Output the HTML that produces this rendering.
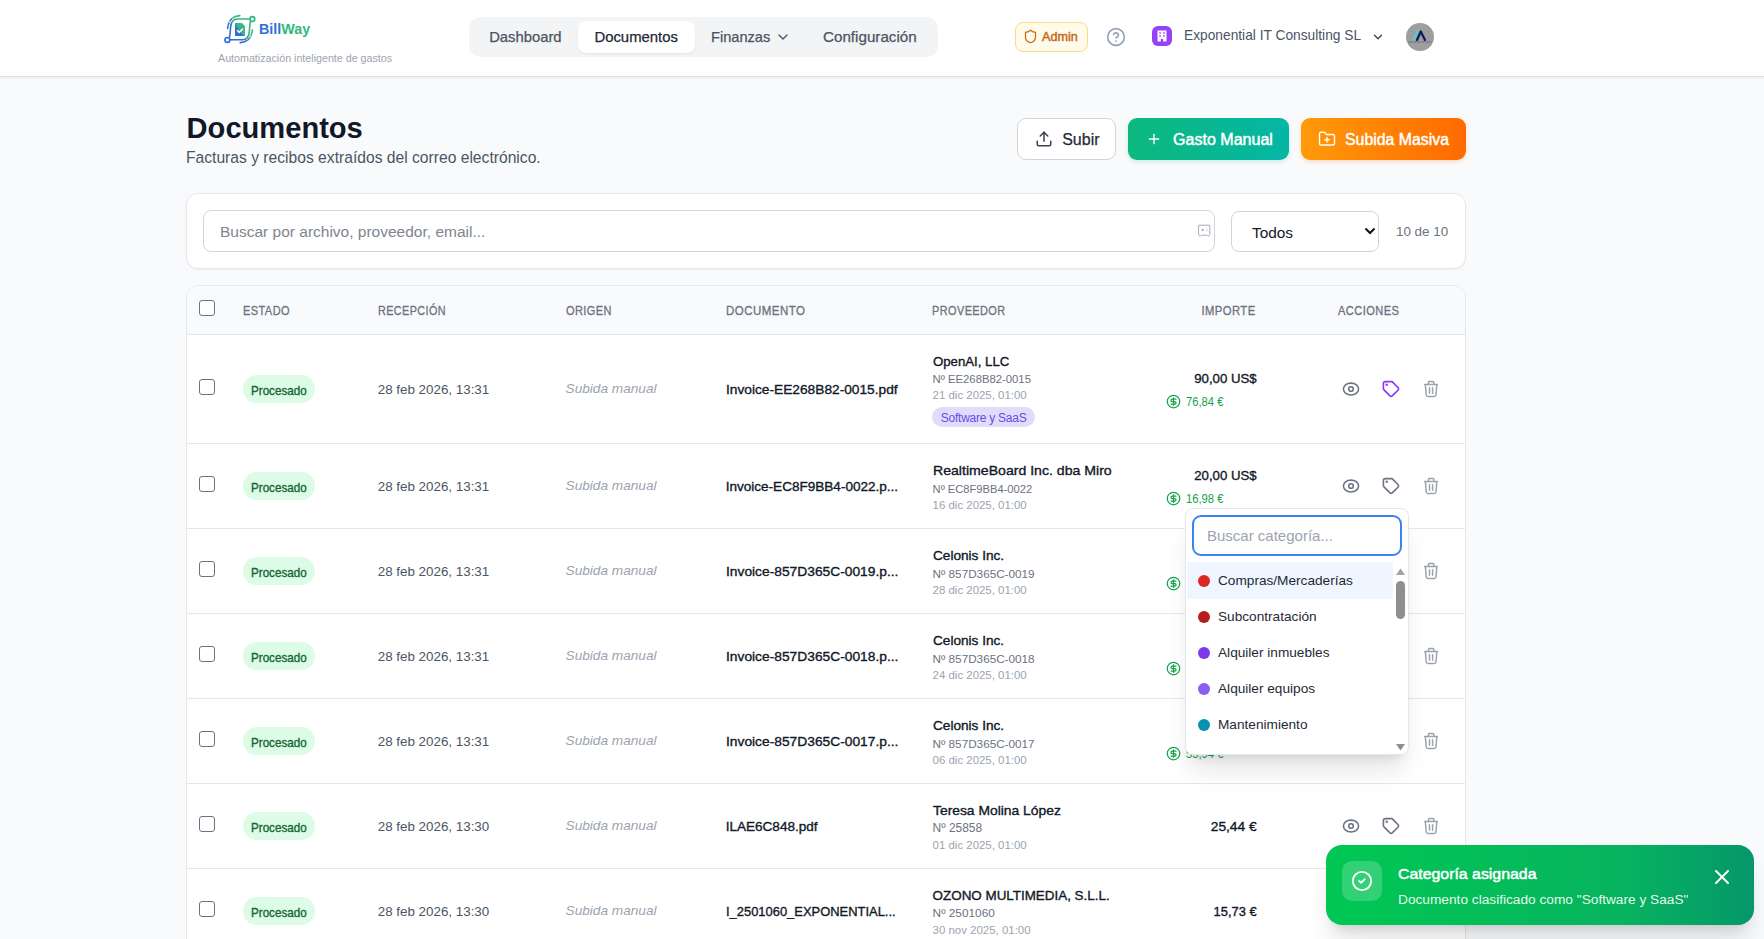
<!DOCTYPE html>
<html lang="es"><head><meta charset="utf-8"><title>Documentos - BillWay</title>
<style>
html,body{margin:0;padding:0;}
body{width:1764px;height:939px;overflow:hidden;position:relative;background:#f9fafb;font-family:"Liberation Sans",sans-serif;}
.a{position:absolute;}
.t{position:absolute;line-height:1;white-space:nowrap;}
svg.a{overflow:visible;}
</style></head><body>

<div class="a" style="left:0px;top:0px;width:1764px;height:76px;background:#fff;"></div>
<div class="a" style="left:0px;top:76px;width:1764px;height:1px;background:#dfe1e6;"></div>
<div class="a" style="left:0px;top:77px;width:1764px;height:3px;background:linear-gradient(#eceef1,#f9fafb);"></div>
<svg class="a" style="left:220px;top:12px" width="40" height="34" viewBox="0 0 40 34">
<defs><linearGradient id="lg" x1="0" y1="1" x2="1" y2="0"><stop offset="0.3" stop-color="#2f6fd8"/><stop offset="0.7" stop-color="#34b77a"/></linearGradient>
<linearGradient id="dg" x1="0" y1="1" x2="1" y2="0"><stop offset="0.38" stop-color="#2f6fd8"/><stop offset="0.5" stop-color="#3bb58a"/></linearGradient></defs>
<g fill="none" stroke="url(#lg)" stroke-width="1.6" stroke-linecap="round">
<path d="M29.9 7 L17.5 7 C12.8 7 10.8 10.5 10.5 16 C10.3 21 9.9 24 9.3 25.8"/>
<path d="M9.9 27.8 L22.5 27.8 C27.2 27.8 29.2 24.5 29.5 18 C29.7 13 30.1 10.5 30.6 9.2"/>
<path d="M19.8 3.6 C12.5 4 8.5 8.5 7.6 16.5" stroke-dasharray="7 1.6 3 2"/>
<path d="M20.2 30.6 C27.5 30.2 31.5 26 32.4 18" stroke-dasharray="7 1.6 3 2"/>
</g>
<circle cx="32.4" cy="7.1" r="2.4" fill="none" stroke="#34b77a" stroke-width="1.7"/>
<circle cx="7.4" cy="27.9" r="2.4" fill="none" stroke="#2f6fd8" stroke-width="1.7"/>
<path d="M15 11 L22 11 L25 14.2 L25 23.4 Q25 24 24.4 24 L15.6 24 Q15 24 15 23.4 Z" fill="url(#dg)"/>
<path d="M17.6 18.6 L19.4 20.3 L22.6 17" fill="none" stroke="#fff" stroke-width="1.6" stroke-linecap="round" stroke-linejoin="round"/>
</svg>
<div class="t" style="top:21.90px;font-size:14.3px;color:#2f6fd8;left:259.00px;font-weight:700;"><span style="color:#2f6fd8">Bill</span><span style="color:#32b97a">Way</span></div>
<div class="t" style="top:52.94px;font-size:10.7px;color:#9ca3af;left:218.00px;">Automatización inteligente de gastos</div>
<div class="a" style="left:469px;top:17px;width:469px;height:40px;background:#f3f4f6;border-radius:12px;"></div>
<div class="a" style="left:578px;top:21px;width:117px;height:32px;background:#fff;border-radius:8px;box-shadow:0 1px 2px rgba(0,0,0,0.08);"></div>
<div class="t" style="top:29.97px;font-size:14.8px;color:#4b5563;left:489.20px;-webkit-text-stroke:0.25px currentColor;">Dashboard</div>
<div class="t" style="top:29.89px;font-size:14.9px;color:#1f2937;left:594.40px;-webkit-text-stroke:0.25px currentColor;">Documentos</div>
<div class="t" style="top:30.14px;font-size:14.6px;color:#4b5563;left:711.00px;-webkit-text-stroke:0.25px currentColor;">Finanzas</div>
<svg class="a" style="left:775.00px;top:29.00px;" width="16" height="16" viewBox="0 0 24 24" fill="none" stroke="#4b5563" stroke-width="2" stroke-linecap="round" stroke-linejoin="round"><path d="m6 9 6 6 6-6"/></svg>
<div class="t" style="top:28.53px;font-size:15.2px;color:#4b5563;left:823.00px;-webkit-text-stroke:0.25px currentColor;">Configuración</div>
<div class="a" style="left:1015px;top:22px;width:73px;height:30px;box-sizing:border-box;background:#fffbeb;border:1px solid #fcd98a;border-radius:8px;"></div>
<svg class="a" style="left:1023.30px;top:29.20px;" width="15" height="15" viewBox="0 0 24 24" fill="none" stroke="#c4681a" stroke-width="2" stroke-linecap="round" stroke-linejoin="round"><path d="M20 13c0 5-3.5 7.5-7.66 8.95a1 1 0 0 1-.67-.01C7.5 20.5 4 18 4 13V6a1 1 0 0 1 1-1c2 0 4.5-1.2 6.24-2.72a1.17 1.17 0 0 1 1.52 0C14.51 3.81 17 5 19 5a1 1 0 0 1 1 1z"/></svg>
<div class="t" style="top:30.63px;font-size:12.6px;color:#c4681a;left:1042.00px;-webkit-text-stroke:0.45px currentColor;">Admin</div>
<svg class="a" style="left:1106.00px;top:26.80px;" width="20" height="20" viewBox="0 0 24 24" fill="none" stroke="#94a3b8" stroke-width="2" stroke-linecap="round" stroke-linejoin="round"><circle cx="12" cy="12" r="10"/><path d="M9.09 9a3 3 0 0 1 5.83 1c0 2-3 3-3 3"/><path d="M12 17h.01"/></svg>
<div class="a" style="left:1152px;top:26px;width:20px;height:20px;background:#9541f5;border-radius:6px;"></div>
<svg class="a" style="left:1156px;top:30px" width="12" height="12" viewBox="0 0 12 12"><path d="M1.5 0.5 H10.5 V11.5 H7.2 V9 H4.8 V11.5 H1.5 Z" fill="#fff"/>
<rect x="3.3" y="2.2" width="1.5" height="1.5" fill="#9541f5"/><rect x="7.2" y="2.2" width="1.5" height="1.5" fill="#9541f5"/>
<rect x="3.3" y="5.2" width="1.5" height="1.5" fill="#9541f5"/><rect x="7.2" y="5.2" width="1.5" height="1.5" fill="#9541f5"/></svg>
<div class="t" style="top:28.96px;font-size:13.75px;color:#4b5563;left:1184.00px;">Exponential IT Consulting SL</div>
<svg class="a" style="left:1371.00px;top:30.00px;" width="14" height="14" viewBox="0 0 24 24" fill="none" stroke="#374151" stroke-width="2.2" stroke-linecap="round" stroke-linejoin="round"><path d="m6 9 6 6 6-6"/></svg>
<div class="a" style="left:1406px;top:23px;width:28px;height:28px;background:#9e9e9e;border-radius:50%;"></div>
<svg class="a" style="left:1406px;top:23px" width="28" height="28" viewBox="0 0 28 28">
<path d="M7.5 17 L11.5 8.2" stroke="#4fd1c5" stroke-width="2" stroke-linecap="round"/>
<path d="M11 17 L14.8 8.5 L19 17" fill="none" stroke="#0a1a5c" stroke-width="2.2" stroke-linecap="round" stroke-linejoin="round"/>
<path d="M2.3 19 H25.5" stroke="#2b3a6a" stroke-width="0.9" stroke-dasharray="1 0.8 1.6 0.7" opacity="0.75"/></svg>
<div class="t" style="top:113.87px;font-size:29.1px;color:#111827;left:186.60px;font-weight:700;">Documentos</div>
<div class="t" style="top:149.95px;font-size:15.65px;color:#4b5563;left:186.00px;">Facturas y recibos extraídos del correo electrónico.</div>
<div class="a" style="left:1017px;top:118px;width:99px;height:42px;box-sizing:border-box;background:#fff;border:1px solid #d1d5db;border-radius:9px;"></div>
<svg class="a" style="left:1035.00px;top:130.00px;" width="18" height="18" viewBox="0 0 24 24" fill="none" stroke="#374151" stroke-width="2" stroke-linecap="round" stroke-linejoin="round"><path d="M21 15v4a2 2 0 0 1-2 2H5a2 2 0 0 1-2-2v-4"/><polyline points="17 8 12 3 7 8"/><line x1="12" y1="3" x2="12" y2="15"/></svg>
<div class="t" style="top:131.66px;font-size:16px;color:#1f2937;left:1062.20px;-webkit-text-stroke:0.25px currentColor;">Subir</div>
<div class="a" style="left:1128px;top:118px;width:161px;height:42px;background:linear-gradient(90deg,#0cb97c,#05b6a6);border-radius:9px;box-shadow:0 2px 4px rgba(16,185,129,0.2);"></div>
<svg class="a" style="left:1146.20px;top:131.20px;" width="16" height="16" viewBox="0 0 24 24" fill="none" stroke="#fff" stroke-width="2" stroke-linecap="round" stroke-linejoin="round"><path d="M5 12h14"/><path d="M12 5v14"/></svg>
<div class="t" style="top:131.76px;font-size:15.64px;color:#fff;left:1172.50px;-webkit-text-stroke:0.45px currentColor;transform:scaleX(1.0274);transform-origin:left center;">Gasto Manual</div>
<div class="a" style="left:1301px;top:118px;width:165px;height:42px;background:linear-gradient(90deg,#ff9a0a,#ff6a00);border-radius:9px;box-shadow:0 2px 4px rgba(249,115,22,0.2);"></div>
<svg class="a" style="left:1318.00px;top:130.00px;" width="18" height="18" viewBox="0 0 24 24" fill="none" stroke="#fff" stroke-width="1.8" stroke-linecap="round" stroke-linejoin="round"><path d="M12 10v6"/><path d="M9 13h6"/><path d="M20 20a2 2 0 0 0 2-2V8a2 2 0 0 0-2-2h-7.9a2 2 0 0 1-1.69-.9L9.6 3.9A2 2 0 0 0 7.93 3H4a2 2 0 0 0-2 2v13a2 2 0 0 0 2 2Z"/></svg>
<div class="t" style="top:131.76px;font-size:15.64px;color:#fff;left:1344.50px;-webkit-text-stroke:0.45px currentColor;transform:scaleX(1.0142);transform-origin:left center;">Subida Masiva</div>
<div class="a" style="left:186px;top:193px;width:1280px;height:76px;box-sizing:border-box;background:#fff;border:1px solid #e5e7eb;border-radius:12px;box-shadow:0 1px 2px rgba(0,0,0,0.05);"></div>
<div class="a" style="left:203px;top:210px;width:1012px;height:42px;box-sizing:border-box;background:#fff;border:1px solid #d1d5db;border-radius:8px;"></div>
<div class="t" style="top:224.38px;font-size:15.5px;color:#80858e;left:220.00px;">Buscar por archivo, proveedor, email...</div>
<svg class="a" style="left:1188px;top:216px" width="32" height="30" viewBox="0 0 32 30"><path d="M10.6 9.6 Q10.6 9.2 11 9.2 H21.4 Q21.8 9.2 21.8 9.6 V18.4 L20.3 20.5 L19 19.2 H13.4 L12.1 20.5 L10.6 18.4 Z" fill="none" stroke="#a3a8b0" stroke-width="0.95" stroke-linejoin="round"/><path d="M14.7 12.6 L15.1 13.6 L16.1 13.7 L15.3 14.3 L15.6 15.3 L14.7 14.7 L13.8 15.3 L14.1 14.3 L13.3 13.7 L14.3 13.6 Z" fill="#8a8f98"/><rect x="18.6" y="12.3" width="1" height="3.4" fill="#d4d7dc"/></svg>
<div class="a" style="left:1231px;top:211px;width:148px;height:41px;box-sizing:border-box;background:#fff;border:1px solid #d1d5db;border-radius:8px;"></div>
<div class="t" style="top:224.76px;font-size:15.4px;color:#111827;left:1252.00px;">Todos</div>
<svg class="a" style="left:1364px;top:225px" width="12" height="12" viewBox="0 0 12 12"><path d="M1.5 3.5 L6 8 L10.5 3.5" fill="none" stroke="#111" stroke-width="2"/></svg>
<div class="t" style="top:224.56px;font-size:13.4px;color:#6b7280;left:1396.00px;">10 de 10</div>
<div class="a" style="left:186px;top:285px;width:1280px;height:715px;box-sizing:border-box;background:#fff;border:1px solid #e5e7eb;border-radius:12px;overflow:hidden;"></div>
<div class="a" style="left:187px;top:286px;width:1278px;height:48px;background:#f9fafb;border-radius:11px 11px 0 0;"></div>
<div class="a" style="left:187px;top:334px;width:1278px;height:1px;background:#e5e7eb;"></div>
<div class="a" style="left:199px;top:300px;width:16px;height:16px;box-sizing:border-box;background:#fff;border:1.5px solid #6b7280;border-radius:3px;"></div>
<div class="t" style="top:304.63px;font-size:12.6px;color:#6b7280;left:242.70px;letter-spacing:0.5px;-webkit-text-stroke:0.3px currentColor;transform:scaleX(0.8726);transform-origin:left center;">ESTADO</div>
<div class="t" style="top:304.63px;font-size:12.6px;color:#6b7280;left:377.70px;letter-spacing:0.5px;-webkit-text-stroke:0.3px currentColor;transform:scaleX(0.8567);transform-origin:left center;">RECEPCIÓN</div>
<div class="t" style="top:304.63px;font-size:12.6px;color:#6b7280;left:565.60px;letter-spacing:0.5px;-webkit-text-stroke:0.3px currentColor;transform:scaleX(0.8730);transform-origin:left center;">ORIGEN</div>
<div class="t" style="top:304.63px;font-size:12.6px;color:#6b7280;left:725.50px;letter-spacing:0.5px;-webkit-text-stroke:0.3px currentColor;transform:scaleX(0.9144);transform-origin:left center;">DOCUMENTO</div>
<div class="t" style="top:304.63px;font-size:12.6px;color:#6b7280;left:932.40px;letter-spacing:0.5px;-webkit-text-stroke:0.3px currentColor;transform:scaleX(0.8661);transform-origin:left center;">PROVEEDOR</div>
<div class="t" style="top:304.63px;font-size:12.6px;color:#6b7280;right:508.00px;letter-spacing:0.5px;-webkit-text-stroke:0.3px currentColor;transform:scaleX(0.8935);transform-origin:right center;">IMPORTE</div>
<div class="t" style="top:304.63px;font-size:12.6px;color:#6b7280;left:1338.00px;letter-spacing:0.5px;-webkit-text-stroke:0.3px currentColor;transform:scaleX(0.8785);transform-origin:left center;">ACCIONES</div>
<div class="a" style="left:187px;top:443px;width:1278px;height:1px;background:#e5e7eb;"></div>
<div class="a" style="left:199px;top:379px;width:16px;height:16px;box-sizing:border-box;background:#fff;border:1.5px solid #6b7280;border-radius:3px;"></div>
<div class="a" style="left:243px;top:375.0px;width:72px;height:28.0px;background:#dcfce7;border-radius:14px;"></div>
<div class="t" style="top:384.52px;font-size:12.15px;color:#166534;left:251.00px;-webkit-text-stroke:0.35px currentColor;transform:scaleX(0.9583);transform-origin:left center;">Procesado</div>
<div class="t" style="top:382.67px;font-size:13.38px;color:#4b5563;left:377.70px;">28 feb 2026, 13:31</div>
<div class="t" style="top:382.45px;font-size:13.64px;color:#9ca3af;left:565.60px;font-style:italic;">Subida manual</div>
<div class="t" style="top:382.53px;font-size:13.55px;color:#111827;left:725.70px;-webkit-text-stroke:0.35px currentColor;transform:scaleX(1.0127);transform-origin:left center;">Invoice-EE268B82-0015.pdf</div>
<div class="t" style="top:354.65px;font-size:13.41px;color:#111827;left:932.60px;-webkit-text-stroke:0.35px currentColor;transform:scaleX(0.9849);transform-origin:left center;">OpenAI, LLC</div>
<div class="t" style="top:374.43px;font-size:11.3px;color:#6b7280;left:932.60px;">Nº EE268B82-0015</div>
<div class="t" style="top:390.11px;font-size:11.45px;color:#9ca3af;left:932.60px;">21 dic 2025, 01:00</div>
<div class="a" style="left:932px;top:407.0px;width:103px;height:20.0px;background:#e0ddfb;border-radius:10px;"></div>
<div class="t" style="top:412.24px;font-size:12px;color:#6a48ea;left:940.80px;letter-spacing:-0.25px;">Software y SaaS</div>
<div class="t" style="top:372.41px;font-size:13.69px;color:#111827;right:507.60px;-webkit-text-stroke:0.35px currentColor;transform:scaleX(0.9655);transform-origin:right center;">90,00 US$</div>
<svg class="a" style="left:1165.50px;top:393.50px;" width="15" height="15" viewBox="0 0 24 24" fill="none" stroke="#16a34a" stroke-width="2" stroke-linecap="round" stroke-linejoin="round"><circle cx="12" cy="12" r="10"/><path d="M16 8h-6a2 2 0 1 0 0 4h4a2 2 0 1 1 0 4H8"/><path d="M12 18V6"/></svg>
<div class="t" style="top:396.08px;font-size:12.43px;color:#16a34a;left:1185.60px;-webkit-text-stroke:0px currentColor;transform:scaleX(0.9018);transform-origin:left center;">76,84 €</div>
<svg class="a" style="left:1335px;top:375.00px" width="32" height="28" viewBox="0 0 32 28" fill="none" stroke="#6b7280" stroke-width="1.55"><path d="M8.4 14 C8.6 10.4 12 8.1 16 8.1 C20 8.1 23.4 10.4 23.6 14 C23.4 17.6 20 19.9 16 19.9 C12 19.9 8.6 17.6 8.4 14 Z"/><circle cx="16" cy="14" r="2.3"/></svg>
<svg class="a" style="left:1375px;top:375.00px" width="32" height="28" viewBox="0 0 32 28" fill="none" stroke="#8a35f0" stroke-width="1.6" stroke-linejoin="round"><path d="M10.4 6.6 H17.1 L23.2 12.7 Q24 13.9 23.2 15 L17.2 20.9 Q16.1 21.9 15 20.9 L9 14.9 Q8.4 14.3 8.4 13.6 V8.6 Q8.4 6.6 10.4 6.6 Z"/><circle cx="11.7" cy="9.8" r="0.45" fill="#8a35f0"/></svg>
<svg class="a" style="left:1415px;top:375.00px" width="32" height="28" viewBox="0 0 32 28" fill="none" stroke="#9ca3af" stroke-width="1.5" stroke-linecap="round" stroke-linejoin="round"><path d="M9.6 9.6 H22.4"/><path d="M13.5 9.6 V7.3 Q13.5 6.5 14.3 6.5 H18 Q18.8 6.5 18.8 7.3 V9.6"/><path d="M10.4 9.8 L11.2 20 Q11.4 21.5 12.9 21.5 H19.3 Q20.8 21.5 21 20 L21.8 9.8"/><path d="M14.5 12.8 V18.3"/><path d="M17.6 12.8 V18.3"/></svg>
<div class="a" style="left:187px;top:528px;width:1278px;height:1px;background:#e5e7eb;"></div>
<div class="a" style="left:199px;top:476px;width:16px;height:16px;box-sizing:border-box;background:#fff;border:1.5px solid #6b7280;border-radius:3px;"></div>
<div class="a" style="left:243px;top:472.0px;width:72px;height:28.0px;background:#dcfce7;border-radius:14px;"></div>
<div class="t" style="top:481.52px;font-size:12.15px;color:#166534;left:251.00px;-webkit-text-stroke:0.35px currentColor;transform:scaleX(0.9583);transform-origin:left center;">Procesado</div>
<div class="t" style="top:479.67px;font-size:13.38px;color:#4b5563;left:377.70px;">28 feb 2026, 13:31</div>
<div class="t" style="top:479.45px;font-size:13.64px;color:#9ca3af;left:565.60px;font-style:italic;">Subida manual</div>
<div class="t" style="top:479.53px;font-size:13.55px;color:#111827;left:725.70px;-webkit-text-stroke:0.35px currentColor;">Invoice-EC8F9BB4-0022.p...</div>
<div class="t" style="top:463.95px;font-size:13.41px;color:#111827;left:932.60px;-webkit-text-stroke:0.35px currentColor;transform:scaleX(1.0517);transform-origin:left center;">RealtimeBoard Inc. dba Miro</div>
<div class="t" style="top:483.75px;font-size:11.16px;color:#6b7280;left:932.60px;">Nº EC8F9BB4-0022</div>
<div class="t" style="top:499.81px;font-size:11.45px;color:#9ca3af;left:932.60px;">16 dic 2025, 01:00</div>
<div class="t" style="top:469.41px;font-size:13.69px;color:#111827;right:507.60px;-webkit-text-stroke:0.35px currentColor;transform:scaleX(0.9655);transform-origin:right center;">20,00 US$</div>
<svg class="a" style="left:1165.50px;top:490.50px;" width="15" height="15" viewBox="0 0 24 24" fill="none" stroke="#16a34a" stroke-width="2" stroke-linecap="round" stroke-linejoin="round"><circle cx="12" cy="12" r="10"/><path d="M16 8h-6a2 2 0 1 0 0 4h4a2 2 0 1 1 0 4H8"/><path d="M12 18V6"/></svg>
<div class="t" style="top:493.08px;font-size:12.43px;color:#16a34a;left:1185.60px;-webkit-text-stroke:0px currentColor;transform:scaleX(0.9018);transform-origin:left center;">16,98 €</div>
<svg class="a" style="left:1335px;top:472.00px" width="32" height="28" viewBox="0 0 32 28" fill="none" stroke="#6b7280" stroke-width="1.55"><path d="M8.4 14 C8.6 10.4 12 8.1 16 8.1 C20 8.1 23.4 10.4 23.6 14 C23.4 17.6 20 19.9 16 19.9 C12 19.9 8.6 17.6 8.4 14 Z"/><circle cx="16" cy="14" r="2.3"/></svg>
<svg class="a" style="left:1375px;top:472.00px" width="32" height="28" viewBox="0 0 32 28" fill="none" stroke="#6b7280" stroke-width="1.6" stroke-linejoin="round"><path d="M10.4 6.6 H17.1 L23.2 12.7 Q24 13.9 23.2 15 L17.2 20.9 Q16.1 21.9 15 20.9 L9 14.9 Q8.4 14.3 8.4 13.6 V8.6 Q8.4 6.6 10.4 6.6 Z"/><circle cx="11.7" cy="9.8" r="0.45" fill="#6b7280"/></svg>
<svg class="a" style="left:1415px;top:472.00px" width="32" height="28" viewBox="0 0 32 28" fill="none" stroke="#9ca3af" stroke-width="1.5" stroke-linecap="round" stroke-linejoin="round"><path d="M9.6 9.6 H22.4"/><path d="M13.5 9.6 V7.3 Q13.5 6.5 14.3 6.5 H18 Q18.8 6.5 18.8 7.3 V9.6"/><path d="M10.4 9.8 L11.2 20 Q11.4 21.5 12.9 21.5 H19.3 Q20.8 21.5 21 20 L21.8 9.8"/><path d="M14.5 12.8 V18.3"/><path d="M17.6 12.8 V18.3"/></svg>
<div class="a" style="left:187px;top:613px;width:1278px;height:1px;background:#e5e7eb;"></div>
<div class="a" style="left:199px;top:561px;width:16px;height:16px;box-sizing:border-box;background:#fff;border:1.5px solid #6b7280;border-radius:3px;"></div>
<div class="a" style="left:243px;top:557.0px;width:72px;height:28.0px;background:#dcfce7;border-radius:14px;"></div>
<div class="t" style="top:566.52px;font-size:12.15px;color:#166534;left:251.00px;-webkit-text-stroke:0.35px currentColor;transform:scaleX(0.9583);transform-origin:left center;">Procesado</div>
<div class="t" style="top:564.67px;font-size:13.38px;color:#4b5563;left:377.70px;">28 feb 2026, 13:31</div>
<div class="t" style="top:564.45px;font-size:13.64px;color:#9ca3af;left:565.60px;font-style:italic;">Subida manual</div>
<div class="t" style="top:564.53px;font-size:13.55px;color:#111827;left:725.70px;-webkit-text-stroke:0.35px currentColor;transform:scaleX(1.0175);transform-origin:left center;">Invoice-857D365C-0019.p...</div>
<div class="t" style="top:548.95px;font-size:13.41px;color:#111827;left:932.60px;-webkit-text-stroke:0.35px currentColor;transform:scaleX(1.0154);transform-origin:left center;">Celonis Inc.</div>
<div class="t" style="top:568.27px;font-size:11.73px;color:#6b7280;left:932.60px;">Nº 857D365C-0019</div>
<div class="t" style="top:584.81px;font-size:11.45px;color:#9ca3af;left:932.60px;">28 dic 2025, 01:00</div>
<div class="t" style="top:554.41px;font-size:13.69px;color:#111827;right:507.60px;-webkit-text-stroke:0.35px currentColor;transform:scaleX(0.9655);transform-origin:right center;">55,94 US$</div>
<svg class="a" style="left:1165.50px;top:575.50px;" width="15" height="15" viewBox="0 0 24 24" fill="none" stroke="#16a34a" stroke-width="2" stroke-linecap="round" stroke-linejoin="round"><circle cx="12" cy="12" r="10"/><path d="M16 8h-6a2 2 0 1 0 0 4h4a2 2 0 1 1 0 4H8"/><path d="M12 18V6"/></svg>
<div class="t" style="top:578.08px;font-size:12.43px;color:#16a34a;left:1185.60px;-webkit-text-stroke:0px currentColor;transform:scaleX(0.9018);transform-origin:left center;">47,53 €</div>
<svg class="a" style="left:1335px;top:557.00px" width="32" height="28" viewBox="0 0 32 28" fill="none" stroke="#6b7280" stroke-width="1.55"><path d="M8.4 14 C8.6 10.4 12 8.1 16 8.1 C20 8.1 23.4 10.4 23.6 14 C23.4 17.6 20 19.9 16 19.9 C12 19.9 8.6 17.6 8.4 14 Z"/><circle cx="16" cy="14" r="2.3"/></svg>
<svg class="a" style="left:1375px;top:557.00px" width="32" height="28" viewBox="0 0 32 28" fill="none" stroke="#6b7280" stroke-width="1.6" stroke-linejoin="round"><path d="M10.4 6.6 H17.1 L23.2 12.7 Q24 13.9 23.2 15 L17.2 20.9 Q16.1 21.9 15 20.9 L9 14.9 Q8.4 14.3 8.4 13.6 V8.6 Q8.4 6.6 10.4 6.6 Z"/><circle cx="11.7" cy="9.8" r="0.45" fill="#6b7280"/></svg>
<svg class="a" style="left:1415px;top:557.00px" width="32" height="28" viewBox="0 0 32 28" fill="none" stroke="#9ca3af" stroke-width="1.5" stroke-linecap="round" stroke-linejoin="round"><path d="M9.6 9.6 H22.4"/><path d="M13.5 9.6 V7.3 Q13.5 6.5 14.3 6.5 H18 Q18.8 6.5 18.8 7.3 V9.6"/><path d="M10.4 9.8 L11.2 20 Q11.4 21.5 12.9 21.5 H19.3 Q20.8 21.5 21 20 L21.8 9.8"/><path d="M14.5 12.8 V18.3"/><path d="M17.6 12.8 V18.3"/></svg>
<div class="a" style="left:187px;top:698px;width:1278px;height:1px;background:#e5e7eb;"></div>
<div class="a" style="left:199px;top:646px;width:16px;height:16px;box-sizing:border-box;background:#fff;border:1.5px solid #6b7280;border-radius:3px;"></div>
<div class="a" style="left:243px;top:642.0px;width:72px;height:28.0px;background:#dcfce7;border-radius:14px;"></div>
<div class="t" style="top:651.52px;font-size:12.15px;color:#166534;left:251.00px;-webkit-text-stroke:0.35px currentColor;transform:scaleX(0.9583);transform-origin:left center;">Procesado</div>
<div class="t" style="top:649.67px;font-size:13.38px;color:#4b5563;left:377.70px;">28 feb 2026, 13:31</div>
<div class="t" style="top:649.45px;font-size:13.64px;color:#9ca3af;left:565.60px;font-style:italic;">Subida manual</div>
<div class="t" style="top:649.53px;font-size:13.55px;color:#111827;left:725.70px;-webkit-text-stroke:0.35px currentColor;transform:scaleX(1.0175);transform-origin:left center;">Invoice-857D365C-0018.p...</div>
<div class="t" style="top:633.95px;font-size:13.41px;color:#111827;left:932.60px;-webkit-text-stroke:0.35px currentColor;transform:scaleX(1.0154);transform-origin:left center;">Celonis Inc.</div>
<div class="t" style="top:653.27px;font-size:11.73px;color:#6b7280;left:932.60px;">Nº 857D365C-0018</div>
<div class="t" style="top:669.81px;font-size:11.45px;color:#9ca3af;left:932.60px;">24 dic 2025, 01:00</div>
<div class="t" style="top:639.41px;font-size:13.69px;color:#111827;right:507.60px;-webkit-text-stroke:0.35px currentColor;transform:scaleX(0.9655);transform-origin:right center;">55,94 US$</div>
<svg class="a" style="left:1165.50px;top:660.50px;" width="15" height="15" viewBox="0 0 24 24" fill="none" stroke="#16a34a" stroke-width="2" stroke-linecap="round" stroke-linejoin="round"><circle cx="12" cy="12" r="10"/><path d="M16 8h-6a2 2 0 1 0 0 4h4a2 2 0 1 1 0 4H8"/><path d="M12 18V6"/></svg>
<div class="t" style="top:663.08px;font-size:12.43px;color:#16a34a;left:1185.60px;-webkit-text-stroke:0px currentColor;transform:scaleX(0.9018);transform-origin:left center;">47,57 €</div>
<svg class="a" style="left:1335px;top:642.00px" width="32" height="28" viewBox="0 0 32 28" fill="none" stroke="#6b7280" stroke-width="1.55"><path d="M8.4 14 C8.6 10.4 12 8.1 16 8.1 C20 8.1 23.4 10.4 23.6 14 C23.4 17.6 20 19.9 16 19.9 C12 19.9 8.6 17.6 8.4 14 Z"/><circle cx="16" cy="14" r="2.3"/></svg>
<svg class="a" style="left:1375px;top:642.00px" width="32" height="28" viewBox="0 0 32 28" fill="none" stroke="#6b7280" stroke-width="1.6" stroke-linejoin="round"><path d="M10.4 6.6 H17.1 L23.2 12.7 Q24 13.9 23.2 15 L17.2 20.9 Q16.1 21.9 15 20.9 L9 14.9 Q8.4 14.3 8.4 13.6 V8.6 Q8.4 6.6 10.4 6.6 Z"/><circle cx="11.7" cy="9.8" r="0.45" fill="#6b7280"/></svg>
<svg class="a" style="left:1415px;top:642.00px" width="32" height="28" viewBox="0 0 32 28" fill="none" stroke="#9ca3af" stroke-width="1.5" stroke-linecap="round" stroke-linejoin="round"><path d="M9.6 9.6 H22.4"/><path d="M13.5 9.6 V7.3 Q13.5 6.5 14.3 6.5 H18 Q18.8 6.5 18.8 7.3 V9.6"/><path d="M10.4 9.8 L11.2 20 Q11.4 21.5 12.9 21.5 H19.3 Q20.8 21.5 21 20 L21.8 9.8"/><path d="M14.5 12.8 V18.3"/><path d="M17.6 12.8 V18.3"/></svg>
<div class="a" style="left:187px;top:783px;width:1278px;height:1px;background:#e5e7eb;"></div>
<div class="a" style="left:199px;top:731px;width:16px;height:16px;box-sizing:border-box;background:#fff;border:1.5px solid #6b7280;border-radius:3px;"></div>
<div class="a" style="left:243px;top:727.0px;width:72px;height:28.0px;background:#dcfce7;border-radius:14px;"></div>
<div class="t" style="top:736.52px;font-size:12.15px;color:#166534;left:251.00px;-webkit-text-stroke:0.35px currentColor;transform:scaleX(0.9583);transform-origin:left center;">Procesado</div>
<div class="t" style="top:734.67px;font-size:13.38px;color:#4b5563;left:377.70px;">28 feb 2026, 13:31</div>
<div class="t" style="top:734.45px;font-size:13.64px;color:#9ca3af;left:565.60px;font-style:italic;">Subida manual</div>
<div class="t" style="top:734.53px;font-size:13.55px;color:#111827;left:725.70px;-webkit-text-stroke:0.35px currentColor;transform:scaleX(1.0175);transform-origin:left center;">Invoice-857D365C-0017.p...</div>
<div class="t" style="top:718.95px;font-size:13.41px;color:#111827;left:932.60px;-webkit-text-stroke:0.35px currentColor;transform:scaleX(1.0154);transform-origin:left center;">Celonis Inc.</div>
<div class="t" style="top:738.27px;font-size:11.73px;color:#6b7280;left:932.60px;">Nº 857D365C-0017</div>
<div class="t" style="top:754.81px;font-size:11.45px;color:#9ca3af;left:932.60px;">06 dic 2025, 01:00</div>
<div class="t" style="top:724.41px;font-size:13.69px;color:#111827;right:507.60px;-webkit-text-stroke:0.35px currentColor;transform:scaleX(0.9655);transform-origin:right center;">65,94 US$</div>
<svg class="a" style="left:1165.50px;top:745.50px;" width="15" height="15" viewBox="0 0 24 24" fill="none" stroke="#16a34a" stroke-width="2" stroke-linecap="round" stroke-linejoin="round"><circle cx="12" cy="12" r="10"/><path d="M16 8h-6a2 2 0 1 0 0 4h4a2 2 0 1 1 0 4H8"/><path d="M12 18V6"/></svg>
<div class="t" style="top:748.08px;font-size:12.43px;color:#16a34a;left:1185.60px;-webkit-text-stroke:0px currentColor;transform:scaleX(0.9018);transform-origin:left center;">55,94 €</div>
<svg class="a" style="left:1335px;top:727.00px" width="32" height="28" viewBox="0 0 32 28" fill="none" stroke="#6b7280" stroke-width="1.55"><path d="M8.4 14 C8.6 10.4 12 8.1 16 8.1 C20 8.1 23.4 10.4 23.6 14 C23.4 17.6 20 19.9 16 19.9 C12 19.9 8.6 17.6 8.4 14 Z"/><circle cx="16" cy="14" r="2.3"/></svg>
<svg class="a" style="left:1375px;top:727.00px" width="32" height="28" viewBox="0 0 32 28" fill="none" stroke="#6b7280" stroke-width="1.6" stroke-linejoin="round"><path d="M10.4 6.6 H17.1 L23.2 12.7 Q24 13.9 23.2 15 L17.2 20.9 Q16.1 21.9 15 20.9 L9 14.9 Q8.4 14.3 8.4 13.6 V8.6 Q8.4 6.6 10.4 6.6 Z"/><circle cx="11.7" cy="9.8" r="0.45" fill="#6b7280"/></svg>
<svg class="a" style="left:1415px;top:727.00px" width="32" height="28" viewBox="0 0 32 28" fill="none" stroke="#9ca3af" stroke-width="1.5" stroke-linecap="round" stroke-linejoin="round"><path d="M9.6 9.6 H22.4"/><path d="M13.5 9.6 V7.3 Q13.5 6.5 14.3 6.5 H18 Q18.8 6.5 18.8 7.3 V9.6"/><path d="M10.4 9.8 L11.2 20 Q11.4 21.5 12.9 21.5 H19.3 Q20.8 21.5 21 20 L21.8 9.8"/><path d="M14.5 12.8 V18.3"/><path d="M17.6 12.8 V18.3"/></svg>
<div class="a" style="left:187px;top:868px;width:1278px;height:1px;background:#e5e7eb;"></div>
<div class="a" style="left:199px;top:816px;width:16px;height:16px;box-sizing:border-box;background:#fff;border:1.5px solid #6b7280;border-radius:3px;"></div>
<div class="a" style="left:243px;top:812.0px;width:72px;height:28.0px;background:#dcfce7;border-radius:14px;"></div>
<div class="t" style="top:821.52px;font-size:12.15px;color:#166534;left:251.00px;-webkit-text-stroke:0.35px currentColor;transform:scaleX(0.9583);transform-origin:left center;">Procesado</div>
<div class="t" style="top:819.67px;font-size:13.38px;color:#4b5563;left:377.70px;">28 feb 2026, 13:30</div>
<div class="t" style="top:819.45px;font-size:13.64px;color:#9ca3af;left:565.60px;font-style:italic;">Subida manual</div>
<div class="t" style="top:819.53px;font-size:13.55px;color:#111827;left:725.70px;-webkit-text-stroke:0.35px currentColor;">ILAE6C848.pdf</div>
<div class="t" style="top:803.95px;font-size:13.41px;color:#111827;left:932.60px;-webkit-text-stroke:0.35px currentColor;transform:scaleX(1.0331);transform-origin:left center;">Teresa Molina López</div>
<div class="t" style="top:823.09px;font-size:11.94px;color:#6b7280;left:932.60px;">Nº 25858</div>
<div class="t" style="top:839.81px;font-size:11.45px;color:#9ca3af;left:932.60px;">01 dic 2025, 01:00</div>
<div class="t" style="top:820.11px;font-size:13.69px;color:#111827;right:507.40px;-webkit-text-stroke:0.35px currentColor;transform:scaleX(1.0059);transform-origin:right center;">25,44 €</div>
<svg class="a" style="left:1335px;top:812.00px" width="32" height="28" viewBox="0 0 32 28" fill="none" stroke="#6b7280" stroke-width="1.55"><path d="M8.4 14 C8.6 10.4 12 8.1 16 8.1 C20 8.1 23.4 10.4 23.6 14 C23.4 17.6 20 19.9 16 19.9 C12 19.9 8.6 17.6 8.4 14 Z"/><circle cx="16" cy="14" r="2.3"/></svg>
<svg class="a" style="left:1375px;top:812.00px" width="32" height="28" viewBox="0 0 32 28" fill="none" stroke="#6b7280" stroke-width="1.6" stroke-linejoin="round"><path d="M10.4 6.6 H17.1 L23.2 12.7 Q24 13.9 23.2 15 L17.2 20.9 Q16.1 21.9 15 20.9 L9 14.9 Q8.4 14.3 8.4 13.6 V8.6 Q8.4 6.6 10.4 6.6 Z"/><circle cx="11.7" cy="9.8" r="0.45" fill="#6b7280"/></svg>
<svg class="a" style="left:1415px;top:812.00px" width="32" height="28" viewBox="0 0 32 28" fill="none" stroke="#9ca3af" stroke-width="1.5" stroke-linecap="round" stroke-linejoin="round"><path d="M9.6 9.6 H22.4"/><path d="M13.5 9.6 V7.3 Q13.5 6.5 14.3 6.5 H18 Q18.8 6.5 18.8 7.3 V9.6"/><path d="M10.4 9.8 L11.2 20 Q11.4 21.5 12.9 21.5 H19.3 Q20.8 21.5 21 20 L21.8 9.8"/><path d="M14.5 12.8 V18.3"/><path d="M17.6 12.8 V18.3"/></svg>
<div class="a" style="left:199px;top:901px;width:16px;height:16px;box-sizing:border-box;background:#fff;border:1.5px solid #6b7280;border-radius:3px;"></div>
<div class="a" style="left:243px;top:897.0px;width:72px;height:28.0px;background:#dcfce7;border-radius:14px;"></div>
<div class="t" style="top:906.52px;font-size:12.15px;color:#166534;left:251.00px;-webkit-text-stroke:0.35px currentColor;transform:scaleX(0.9583);transform-origin:left center;">Procesado</div>
<div class="t" style="top:904.67px;font-size:13.38px;color:#4b5563;left:377.70px;">28 feb 2026, 13:30</div>
<div class="t" style="top:904.45px;font-size:13.64px;color:#9ca3af;left:565.60px;font-style:italic;">Subida manual</div>
<div class="t" style="top:904.53px;font-size:13.55px;color:#111827;left:725.70px;-webkit-text-stroke:0.35px currentColor;transform:scaleX(0.9545);transform-origin:left center;">I_2501060_EXPONENTIAL...</div>
<div class="t" style="top:888.95px;font-size:13.41px;color:#111827;left:932.60px;-webkit-text-stroke:0.35px currentColor;">OZONO MULTIMEDIA, S.L.L.</div>
<div class="t" style="top:908.19px;font-size:11.83px;color:#6b7280;left:932.60px;">Nº 2501060</div>
<div class="t" style="top:924.81px;font-size:11.45px;color:#9ca3af;left:932.60px;">30 nov 2025, 01:00</div>
<div class="t" style="top:905.11px;font-size:13.69px;color:#111827;right:507.40px;-webkit-text-stroke:0.35px currentColor;transform:scaleX(0.9429);transform-origin:right center;">15,73 €</div>
<svg class="a" style="left:1335px;top:897.00px" width="32" height="28" viewBox="0 0 32 28" fill="none" stroke="#6b7280" stroke-width="1.55"><path d="M8.4 14 C8.6 10.4 12 8.1 16 8.1 C20 8.1 23.4 10.4 23.6 14 C23.4 17.6 20 19.9 16 19.9 C12 19.9 8.6 17.6 8.4 14 Z"/><circle cx="16" cy="14" r="2.3"/></svg>
<svg class="a" style="left:1375px;top:897.00px" width="32" height="28" viewBox="0 0 32 28" fill="none" stroke="#6b7280" stroke-width="1.6" stroke-linejoin="round"><path d="M10.4 6.6 H17.1 L23.2 12.7 Q24 13.9 23.2 15 L17.2 20.9 Q16.1 21.9 15 20.9 L9 14.9 Q8.4 14.3 8.4 13.6 V8.6 Q8.4 6.6 10.4 6.6 Z"/><circle cx="11.7" cy="9.8" r="0.45" fill="#6b7280"/></svg>
<svg class="a" style="left:1415px;top:897.00px" width="32" height="28" viewBox="0 0 32 28" fill="none" stroke="#9ca3af" stroke-width="1.5" stroke-linecap="round" stroke-linejoin="round"><path d="M9.6 9.6 H22.4"/><path d="M13.5 9.6 V7.3 Q13.5 6.5 14.3 6.5 H18 Q18.8 6.5 18.8 7.3 V9.6"/><path d="M10.4 9.8 L11.2 20 Q11.4 21.5 12.9 21.5 H19.3 Q20.8 21.5 21 20 L21.8 9.8"/><path d="M14.5 12.8 V18.3"/><path d="M17.6 12.8 V18.3"/></svg>
<div class="a" style="left:1185px;top:508px;width:224px;height:247px;box-sizing:border-box;background:#fff;border:1px solid #e5e7eb;border-radius:8px;box-shadow:0 20px 25px -5px rgba(0,0,0,0.1),0 8px 10px -6px rgba(0,0,0,0.1);"></div>
<div class="a" style="left:1192px;top:515px;width:210px;height:41px;box-sizing:border-box;background:#fff;border:2px solid #3b82f6;border-radius:9px;"></div>
<div class="t" style="top:528.10px;font-size:15.0px;color:#9ca3af;left:1207.00px;">Buscar categoría...</div>
<div class="a" style="left:1187px;top:562px;width:206px;height:37px;background:#eff6ff;"></div>
<div class="a" style="left:1198px;top:575px;width:12px;height:12px;background:#dc2626;border-radius:50%;"></div>
<div class="t" style="top:574.25px;font-size:13.65px;color:#1f2937;left:1218.00px;">Compras/Mercaderías</div>
<div class="a" style="left:1198px;top:611px;width:12px;height:12px;background:#b91c1c;border-radius:50%;"></div>
<div class="t" style="top:610.25px;font-size:13.65px;color:#1f2937;left:1218.00px;">Subcontratación</div>
<div class="a" style="left:1198px;top:647px;width:12px;height:12px;background:#7c3aed;border-radius:50%;"></div>
<div class="t" style="top:646.25px;font-size:13.65px;color:#1f2937;left:1218.00px;">Alquiler inmuebles</div>
<div class="a" style="left:1198px;top:683px;width:12px;height:12px;background:#8b5cf6;border-radius:50%;"></div>
<div class="t" style="top:682.25px;font-size:13.65px;color:#1f2937;left:1218.00px;">Alquiler equipos</div>
<div class="a" style="left:1198px;top:719px;width:12px;height:12px;background:#0891b2;border-radius:50%;"></div>
<div class="t" style="top:718.25px;font-size:13.65px;color:#1f2937;left:1218.00px;">Mantenimiento</div>
<svg class="a" style="left:1394px;top:565px" width="13" height="189" viewBox="0 0 13 189">
<path d="M2 10 L6.5 3.5 L11 10 Z" fill="#a3a3a3"/>
<rect x="2" y="16" width="9" height="38" rx="4.5" fill="#8f8f8f"/>
<path d="M2 179 L6.5 185.5 L11 179 Z" fill="#8f8f8f"/>
</svg>
<div class="a" style="left:1326px;top:845px;width:428px;height:80px;background:linear-gradient(90deg,#00c853,#07b35f 70%,#05976a);border-radius:16px;box-shadow:0 20px 25px -5px rgba(0,0,0,0.12),0 8px 10px -6px rgba(0,0,0,0.1);"></div>
<div class="a" style="left:1342px;top:861px;width:40px;height:40px;background:rgba(255,255,255,0.2);border-radius:10px;"></div>
<svg class="a" style="left:1350.80px;top:870.00px;" width="22" height="22" viewBox="0 0 24 24" fill="none" stroke="#fff" stroke-width="2" stroke-linecap="round" stroke-linejoin="round"><circle cx="12" cy="12" r="10"/><path d="m9 12 2 2 4-4"/></svg>
<div class="t" style="top:865.58px;font-size:15.5px;color:#fff;left:1398.00px;-webkit-text-stroke:0.5px currentColor;transform:scaleX(1.0236);transform-origin:left center;">Categoría asignada</div>
<div class="t" style="top:892.60px;font-size:13.7px;color:rgba(255,255,255,0.92);left:1398.00px;">Documento clasificado como "Software y SaaS"</div>
<svg class="a" style="left:1710.00px;top:865.00px;" width="24" height="24" viewBox="0 0 24 24" fill="none" stroke="#fff" stroke-width="2" stroke-linecap="round" stroke-linejoin="round"><path d="M18 6 6 18"/><path d="m6 6 12 12"/></svg>
</body></html>
